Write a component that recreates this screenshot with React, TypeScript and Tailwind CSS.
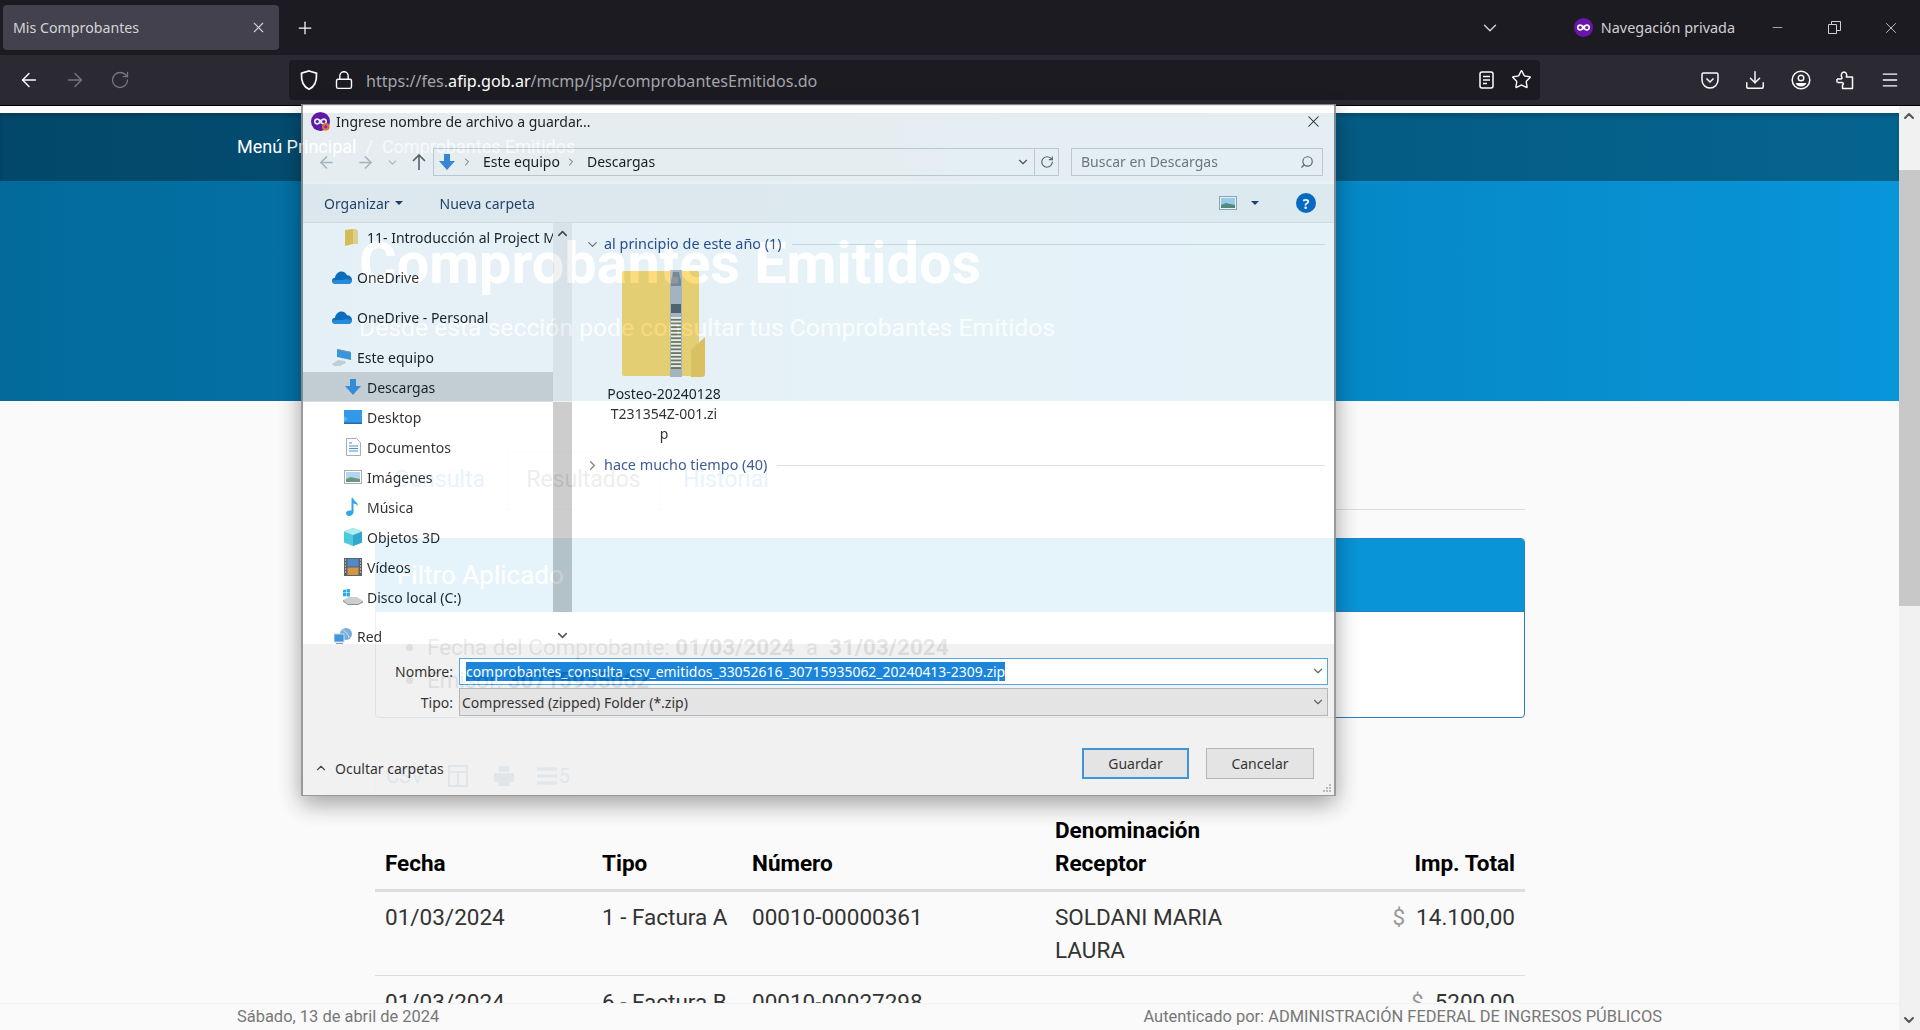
import { ArrowLeft, ArrowRight, RotateCw, Plus, X, ChevronDown, ChevronUp, ChevronRight, Star, Lock, Download, Menu, Minus, Search } from "lucide-react";

const sidebarItems = [
  { label: "Descargas", icon: "down", selected: true },
  { label: "Desktop", icon: "desktop" },
  { label: "Documentos", icon: "docs" },
  { label: "Imágenes", icon: "images" },
  { label: "Música", icon: "music" },
  { label: "Objetos 3D", icon: "cube" },
  { label: "Vídeos", icon: "video" },
  { label: "Disco local (C:)", icon: "disk" },
];

function MaskLogo({ size = 18, badge = false }: { size?: number; badge?: boolean }) {
  return (
    <svg width={size} height={size} viewBox="0 0 18 18" className="shrink-0">
      <circle cx="9" cy="9" r="9" fill="#6b14ad" />
      <path d="M2.8 9c0-2 1.3-3 3-3 1.4 0 2.2.7 3.2 1.3C10 6.7 10.800 6 12.200 6c1.700 0 3 1 3 3s-1.300 3-3 3c-1.400 0-2.200-.7-3.200-1.300C8 11.300 7.200 12 5.800 12c-1.700 0-3-1-3-3z" fill="#fff" />
      <circle cx="5.900" cy="9" r="1.500" fill="#6b14ad" />
      <circle cx="12.100" cy="9" r="1.500" fill="#6b14ad" />
      {badge && <circle cx="14" cy="14" r="3.600" fill="#f5762a" />}
      {badge && <circle cx="14" cy="14" r="1.500" fill="#7b2bd0" />}
    </svg>
  );
}

function WinIcon({ name }: { name: string }) {
  if (name === "down")
    return (
      <svg width="18" height="18" viewBox="0 0 18 18">
        <path d="M6 1h6v7h5l-8 9-8-9h5z" fill="#3b8ede" />
      </svg>
    );
  if (name === "desktop")
    return (
      <svg width="18" height="14" viewBox="0 0 18 14">
        <rect width="18" height="13" fill="#1b8ee6" />
        <path d="M0 12 L4 9 L0 6z" fill="#3fb0f2" />
        <rect y="12.500" width="18" height="1.500" fill="#0b5c9c" />
      </svg>
    );
  if (name === "docs")
    return (
      <svg width="15" height="18" viewBox="0 0 15 18">
        <path d="M.5.500h10l4 4v13H.5z" fill="#fafcff" stroke="#9aa7b5" />
        <path d="M3 5h3M3 8h9M3 10.500h9M3 13h9" stroke="#3f84c8" />
      </svg>
    );
  if (name === "images")
    return (
      <svg width="18" height="14" viewBox="0 0 18 14">
        <rect x=".5" y=".5" width="17" height="13" fill="#fff" stroke="#9ea6ad" />
        <rect x="2" y="2" width="14" height="10" fill="#a9d3ee" />
        <path d="M2 9l5-2 4 1 5 1v3H2z" fill="#5d8a74" />
      </svg>
    );
  if (name === "music")
    return (
      <svg width="14" height="18" viewBox="0 0 14 18">
        <path d="M5.500 0h1.500c.5 3 5 4 5 8-1-1.500-3-2.500-4.500-2.500V14c0 2-2 4-4.500 4C1 18 0 16.500 0 15s2-3 5.500-2.500z" fill="#1a9be6" />
      </svg>
    );
  if (name === "cube")
    return (
      <svg width="18" height="18" viewBox="0 0 18 18">
        <path d="M9 0l9 3.500v11L9 18l-9-3.500v-11z" fill="#38c4d8" />
        <path d="M9 7l9-3.500v11L9 18z" fill="#1c9fc8" />
        <path d="M9 7L0 3.500 9 0l9 3.500z" fill="#a5ecf0" />
      </svg>
    );
  if (name === "video")
    return (
      <svg width="18" height="18" viewBox="0 0 18 18">
        <rect width="18" height="18" fill="#4a5058" />
        <rect x="3.500" y="1" width="11" height="7.500" fill="#3c7ec4" />
        <rect x="3.500" y="9.500" width="11" height="7.500" fill="#d18a2e" />
        <path d="M1 2h1M1 5h1M1 8h1M1 11h1M1 14h1M16 2h1M16 5h1M16 8h1M16 11h1M16 14h1" stroke="#fff" />
      </svg>
    );
  if (name === "disk")
    return (
      <svg width="20" height="16" viewBox="0 0 20 16">
        <path d="M0 11l6-3h8l6 4-5 3H5z" fill="#c6cacd" />
        <path d="M0 11l5 4h10l5-3v1.500L15 16H5l-5-3.500z" fill="#7b8085" />
        <path d="M0 1l3-.5v3H0zM3.500.3L7 0v3.500H3.500zM0 4h3v3.300H0zM3.500 4H7v3.500H3.500z" fill="#14a1e8" />
      </svg>
    );
  if (name === "onedrive")
    return (
      <svg width="20" height="13" viewBox="0 0 20 13">
        <path d="M3.500 13C1.500 13 0 11.500 0 9.800 0 8 1.500 6.800 3 6.800 3.500 3 6.500.5 9.500.5c2.500 0 4.500 1.500 5.500 3.700 2.800 0 5 2.100 5 4.800 0 2.400-1.800 4-4 4z" fill="#0f6cc0" />
        <path d="M3.500 13C1.500 13 0 11.500 0 9.800c3-1 6-1 9-.5 3-1 7-1.500 11-.3 0 2.400-1.800 4-4 4z" fill="#2b8fe0" />
      </svg>
    );
  if (name === "pc")
    return (
      <svg width="20" height="17" viewBox="0 0 20 17">
        <path d="M5 0l14 3v8L5 8z" fill="#3f9be0" />
        <path d="M5 0l14 3v1L5 1z" fill="#7c9cb3" />
        <path d="M0 15l6-4 7 1 1 2-6 3H2z" fill="#d5d9dc" />
      </svg>
    );
  if (name === "net")
    return (
      <svg width="18" height="17" viewBox="0 0 18 17">
        <circle cx="12" cy="6" r="6" fill="#6aa4d8" />
        <path d="M9 2c2 1 6 5 6 8" stroke="#e5f0f9" fill="none" />
        <rect x="0" y="6" width="10" height="8" fill="#2e8bd8" stroke="#bcd6ea" />
        <rect x="2" y="15" width="7" height="1.500" fill="#8a98a4" />
      </svg>
    );
  return (
    <svg width="13" height="17" viewBox="0 0 13 17">
      <path d="M0 1l8-1v15l-8 2z" fill="#ecc550" />
      <path d="M8 0h3l2 2v13H8z" fill="#f5dc8a" />
    </svg>
  );
}

function ZipFolder() {
  const teeth = [0, 1, 2, 3, 4, 5, 6, 7, 8, 9, 10, 11, 12, 13];
  return (
    <svg width="86" height="107" viewBox="0 0 86 107">
      <path d="M1 3a2 2 0 0 1 2-2h73a2 2 0 0 1 2 2v103H3a2 2 0 0 1-2-2z" fill="#fdd96e" />
      <path d="M70 80l14-13v37a3 3 0 0 1-3 3H70z" fill="#f2c95a" />
      <rect x="49" y="0" width="12" height="107" fill="#b6bcc2" />
      <path d="M50 11l2-9h6l2 9v5H50z" fill="#858c93" />
      <rect x="50" y="34" width="10" height="9" fill="#5b6167" />
      {teeth.map((i) => (
        <g key={i}>
          <rect x="50" y={47 + i * 3.700} width="10" height="1.800" fill="#fbfbf5" />
          <rect x="50" y={49 + i * 3.700} width="10" height="1.900" fill="#7c7548" />
        </g>
      ))}
    </svg>
  );
}

function ArrowUpIcon() {
  return (
    <svg width="16" height="18" viewBox="0 0 16 18" className="ml-[12px] text-[#5f6468]">
      <path d="M8 17V2M2 8l6-6 6 6" fill="none" stroke="currentColor" strokeWidth="1.600" />
    </svg>
  );
}

function SaveDialog() {
  return (
    <div className="absolute left-[301px] top-[-2px] z-10 flex h-[692px] w-[1035px] flex-col border border-x-2 border-[#8f8f8f] bg-white font-['Noto_Sans',sans-serif] text-[14px] text-[#1a1a1a] opacity-90 shadow-[0_8px_22px_rgba(0,0,0,0.4)]">
      <div className="h-[6px] shrink-0" />
      {/* title */}
      <div className="flex h-[21px] shrink-0 items-center px-[8px]">
        <MaskLogo size={19} badge />
        <span className="ml-[6px] text-[#202020]">Ingrese nombre de archivo a guardar...</span>
        <X size={19} strokeWidth={1.3} className="ml-auto mr-[3px] text-[#222]" />
      </div>
      {/* address */}
      <div className="mt-[16px] flex h-[28px] shrink-0 items-center pl-[14px]">
        <ArrowLeft size={19} className="text-[#b8c0c6]" />
        <ArrowRight size={19} className="ml-[20px] text-[#b8c0c6]" />
        <ChevronDown size={13} className="ml-[11px] text-[#b8c0c6]" />
        <ArrowUpIcon />
        <div className="ml-[6px] flex h-[28px] w-[626px] items-center border border-[#cdd6db] pl-[4px]">
          <WinIcon name="down" />
          <ChevronRight size={12} className="ml-[5px] text-[#666]" />
          <span className="ml-[10px] pb-[2px]">Este equipo</span>
          <ChevronRight size={12} className="ml-[5px] text-[#666]" />
          <span className="ml-[10px] pb-[2px]">Descargas</span>
          <ChevronDown size={14} className="ml-auto mr-[4px] text-[#555]" />
          <div className="flex h-full w-[24px] items-center justify-center border-l border-[#cdd6db]">
            <RotateCw size={14} className="text-[#666]" />
          </div>
        </div>
        <div className="ml-[12px] flex h-[28px] w-[252px] items-center justify-between border border-[#cdd6db] pl-[9px] pr-[8px] text-[#7a7a7a]">
          <span className="pb-[2px]">Buscar en Descargas</span>
          <Search size={14} className="-scale-x-100 text-[#666]" />
        </div>
      </div>
      {/* toolbar */}
      <div className="mt-[8px] flex h-[39px] shrink-0 items-center border-b border-[#e3e8eb] bg-[#f5f5f5] text-[#1f3a5f]">
        <span className="ml-[21px]">Organizar</span>
        <span className="ml-[5px] h-0 w-0 border-x-[4px] border-t-[4px] border-x-transparent border-t-[#1f3a5f]" />
        <span className="ml-[37px]">Nueva carpeta</span>
        <span className="ml-auto">
          <WinIcon name="images" />
        </span>
        <span className="ml-[14px] h-0 w-0 border-x-[4px] border-t-[4px] border-x-transparent border-t-[#1f3a5f]" />
        <span className="ml-[37px] mr-[18px] flex h-[20px] w-[20px] items-center justify-center rounded-full bg-[#0a66c2] text-[14px] font-bold text-white">?</span>
      </div>
      {/* body */}
      <div className="flex min-h-0 flex-1">
        <div className="-mt-[1px] w-[250px] shrink-0 overflow-hidden">
          <div className="flex h-[30px] items-center whitespace-nowrap pl-[42px]">
            <WinIcon name="folder" />
            <span className="ml-[9px] w-[186px] overflow-hidden">11- Introducción al Project Management</span>
          </div>
          <div className="mt-[10px] flex h-[30px] items-center pl-[29px]">
            <WinIcon name="onedrive" />
            <span className="ml-[5px]">OneDrive</span>
          </div>
          <div className="mt-[10px] flex h-[30px] items-center pl-[29px]">
            <WinIcon name="onedrive" />
            <span className="ml-[5px]">OneDrive - Personal</span>
          </div>
          <div className="mt-[10px] flex h-[30px] items-center pl-[29px]">
            <WinIcon name="pc" />
            <span className="ml-[5px]">Este equipo</span>
          </div>
          {sidebarItems.map((it) => (
            <div key={it.label} className={`flex h-[30px] items-center ${it.selected ? "bg-[#d9d9d9]" : ""}`}>
              <span className="ml-[40px] flex w-[20px] justify-center">
                <WinIcon name={it.icon} />
              </span>
              <span className="ml-[4px]">{it.label}</span>
            </div>
          ))}
          <div className="mt-[9px] flex h-[30px] items-center pl-[31px]">
            <WinIcon name="net" />
            <span className="ml-[5px]">Red</span>
          </div>
        </div>
        {/* sidebar scrollbar */}
        <div className="relative flex w-[19px] shrink-0 flex-col items-center text-[#444]">
          <div className="h-[179px] w-full bg-[#f0f0f0]" />
          <div className="h-[210px] w-full bg-[#c8c8c8]" />
          <ChevronUp size={15} strokeWidth={2.500} className="absolute top-[3px]" />
          <ChevronDown size={15} strokeWidth={2.500} className="absolute bottom-[1px]" />
        </div>
        {/* file list */}
        <div className="min-w-0 flex-1 pl-[13px] pr-[9px]">
          <div className="mt-[10px] flex h-[22px] items-center text-[14.400px] text-[#2b4a8a]">
            <ChevronDown size={15} className="text-[#777]" />
            <span className="ml-[4px] whitespace-nowrap">al principio de este año (1)</span>
            <span className="ml-[10px] h-px flex-1 bg-[#d8dfe3]" />
          </div>
          <div className="ml-[20px] mt-[15px] flex w-[118px] flex-col items-center">
            <ZipFolder />
            <div className="mt-[7px] text-center leading-[20px]">
              Posteo-20240128
              <br />
              T231354Z-001.zi
              <br />p
            </div>
          </div>
          <div className="mt-[10px] flex h-[22px] items-center text-[14.400px] text-[#2b4a8a]">
            <ChevronRight size={15} className="text-[#777]" />
            <span className="ml-[4px] whitespace-nowrap">hace mucho tiempo (40)</span>
            <span className="ml-[10px] h-px flex-1 bg-[#d8dfe3]" />
          </div>
        </div>
      </div>
      {/* footer */}
      <div className="relative h-[151px] shrink-0 bg-[#f0f0f0] text-[14px]">
        <div className="mt-[13px] flex h-[28px] items-center pr-[6px]">
          <span className="w-[150px] text-right">Nombre:</span>
          <div className="ml-[6px] flex h-[27px] flex-1 items-center border border-[#3a9de6] bg-white pl-[6px]">
            <span className="bg-[#0078d7] text-[13.940px] leading-[19px] text-white">comprobantes_consulta_csv_emitidos_33052616_30715935062_20240413-2309.zip</span>
            <ChevronDown size={14} className="ml-auto mr-[2px] text-[#555]" />
          </div>
        </div>
        <div className="mt-[3px] flex h-[28px] items-center pr-[6px]">
          <span className="w-[150px] text-right">Tipo:</span>
          <div className="ml-[6px] flex h-[28px] flex-1 items-center border border-[#adadad] bg-[#e1e1e1] pl-[2px]">
            <span>Compressed (zipped) Folder (*.zip)</span>
            <ChevronDown size={14} className="ml-auto mr-[2px] text-[#555]" />
          </div>
        </div>
        <div className="mt-[32px] flex h-[31px] items-center pr-[20px]">
          <div className="flex items-center pt-[9px]">
            <ChevronUp size={14} className="ml-[11px] text-[#333]" />
            <span className="ml-[7px]">Ocultar carpetas</span>
          </div>
          <button className="ml-auto h-[31px] w-[107px] border-2 border-[#2a88d8] bg-[#e1e1e1]">Guardar</button>
          <button className="ml-[17px] h-[31px] w-[108px] border border-[#adadad] bg-[#e1e1e1]">Cancelar</button>
        </div>
        <svg width="10" height="10" viewBox="0 0 10 10" className="absolute bottom-[2px] right-[2px]">
          <path d="M7 1h2v2H7zM4 4h2v2H4zM7 4h2v2H7zM1 7h2v2H1zM4 7h2v2H4zM7 7h2v2H7z" fill="#b5b5b5" />
        </svg>
      </div>
    </div>
  );
}

function BrowserBar() {
  return (
    <div className="font-['Noto_Sans',sans-serif]">
      {/* tabs */}
      <div className="flex h-[55px] items-center bg-[#1c1b22] text-[#fbfbfe]">
        <div className="ml-[3px] flex h-[45px] w-[276px] items-center justify-between rounded-[4px] bg-[#42414d] pl-[10px] pr-[12px] text-[14.200px] text-[#d4d4d8]">
          <span>Mis Comprobantes</span>
          <X size={17} strokeWidth={1.500} className="text-[#d4d4d8]" />
        </div>
        <Plus size={20} strokeWidth={1.500} className="ml-[16px]" />
        <ChevronDown size={22} strokeWidth={1.500} className="ml-auto mr-[73px] text-[#d4d4d8]" />
        <MaskLogo size={19} />
        <span className="ml-[8px] text-[14.400px] text-[#d0d0d4]">Navegación privada</span>
        <Minus size={15} strokeWidth={1.200} className="ml-[35px] text-[#d0d0d4]" />
        <svg width="13" height="13" viewBox="0 0 13 13" className="ml-[43px] text-[#d0d0d4]">
          <path d="M.5 3.500h8v9h-8zM3.500 3.500v-3h9v9h-4" fill="none" stroke="currentColor" />
        </svg>
        <X size={18} strokeWidth={1.200} className="ml-[41px] mr-[20px] text-[#d0d0d4]" />
      </div>
      {/* toolbar */}
      <div className="flex h-[51px] items-center border-b border-black bg-[#2b2a33] pb-[1px] text-[#fbfbfe]">
        <ArrowLeft size={22} strokeWidth={1.600} className="ml-[18px]" />
        <ArrowRight size={22} strokeWidth={1.600} className="ml-[24px] text-[#77767d]" />
        <RotateCw size={20} strokeWidth={1.600} className="ml-[24px] text-[#77767d]" />
        <div className="ml-[159px] flex h-[40px] w-[1251px] items-center rounded-[4px] bg-[#1c1b22] pl-[10px] pr-[8px]">
          <svg width="20" height="22" viewBox="0 0 20 22">
            <path d="M10 2l7.500 2.200c.5 8-2 13.500-7.500 16-5.500-2.500-8-8-7.500-16z" fill="none" stroke="#fbfbfe" strokeWidth="1.700" />
          </svg>
          <Lock size={20} strokeWidth={1.700} className="ml-[15px]" />
          <div className="ml-[12px] pt-[3px] text-[16.100px] text-[#a4a4ab]">
            https://fes.<span className="text-white">afip.gob.ar</span>/mcmp/jsp/comprobantesEmitidos.do
          </div>
          <svg width="15" height="18" viewBox="0 0 15 18" className="ml-auto">
            <rect x="1" y="1" width="13" height="16" rx="2" fill="none" stroke="#fbfbfe" strokeWidth="1.500" />
            <path d="M4 5.500h7M4 9h7M4 12.500h4" stroke="#fbfbfe" strokeWidth="1.400" />
          </svg>
          <Star size={21} strokeWidth={1.600} className="ml-[17px]" />
        </div>
        <svg width="18" height="18" viewBox="0 0 18 18" className="ml-[161px]">
          <path d="M2.500 2h13A1.500 1.500 0 0 1 17 3.500V9A8 8 0 0 1 1 9V3.500A1.500 1.500 0 0 1 2.500 2z" fill="none" stroke="#fbfbfe" strokeWidth="1.500" />
          <path d="M5.500 7.500L9 11l3.500-3.500" fill="none" stroke="#fbfbfe" strokeWidth="1.500" />
        </svg>
        <Download size={22} strokeWidth={1.600} className="ml-[25px]" />
        <svg width="20" height="20" viewBox="0 0 20 20" className="ml-[25px]">
          <circle cx="10" cy="10" r="8.800" fill="none" stroke="#fbfbfe" strokeWidth="1.500" />
          <circle cx="10" cy="8" r="2.800" fill="none" stroke="#fbfbfe" strokeWidth="1.400" />
          <path d="M4.500 13h11c-1 2.500-3 3.500-5.500 3.500S5.500 15.500 4.500 13z" fill="#fbfbfe" />
        </svg>
        <svg width="18" height="20" viewBox="0 0 18 20" className="ml-[25px]">
          <path d="M1 9h3.500c1.500 0 2-1 1.200-2C5 6 5 2 8 2s3 4 2.300 5h6.200v11.500h-10V15c1-.8 1.500-2-.5-2.500H1.500" fill="none" stroke="#fbfbfe" strokeWidth="1.500" strokeLinejoin="round" />
          <path d="M1 9v3.500" stroke="#fbfbfe" strokeWidth="1.500" />
        </svg>
        <Menu size={20} strokeWidth={1.600} className="ml-[26px]" />
      </div>
    </div>
  );
}

function Page() {
  return (
    <div className="min-w-0 flex-1 bg-[#fafafa] font-['Roboto',sans-serif]">
      <div className="h-[7px] bg-white" />
      <div className="flex h-[68px] items-center bg-gradient-to-r from-[#03486a] to-[#05648f] pb-[2px] pl-[237px] text-[18px] text-white shadow-[inset_0_3px_4px_rgba(0,0,0,0.18)]">
        Menú Principal
        <span className="ml-[9px] text-white/70">/</span>
        <span className="ml-[9px] text-white/70">Comprobantes Emitidos</span>
      </div>
      <div className="h-[220px] bg-gradient-to-r from-[#036a9b] to-[#0895d9] pl-[359px] text-white">
        <div className="pt-[51px] text-[57.600px] font-bold leading-[64px]">Comprobantes Emitidos</div>
        <div className="mt-[15px] text-[24.700px] leading-[34px] text-white/80">Desde esta sección pode consultar tus Comprobantes Emitidos</div>
      </div>
      <div className="ml-[375px] w-[1150px] pt-[50px]">
        {/* tabs */}
        <div className="flex h-[59px] border-b border-[#dddddd] text-[23px]">
          <div className="flex w-[132px] items-center pl-[19px] text-[#0894d6]">Consulta</div>
          <div className="flex w-[153px] items-center justify-center border-x border-t border-[#dddddd] text-[#555]">Resultados</div>
          <div className="flex items-center pl-[23px] text-[#0894d6]">Historial</div>
        </div>
        {/* panel */}
        <div className="mt-[28px] h-[180px] overflow-hidden rounded-[4px] border border-[#2a7fc4] bg-white">
          <div className="flex h-[73px] items-center border-b border-[#2a7fc4] bg-[#0894d6] pl-[21px] text-[26px] text-white">Filtro Aplicado</div>
          <ul className="list-disc pl-[51px] pt-[19px] text-[22.400px] leading-[33px] text-[#444]">
            <li>
              Fecha del Comprobante: <b className="text-[#222]">01/03/2024</b> &nbsp;a&nbsp; <b className="text-[#222]">31/03/2024</b>
            </li>
            <li>
              Emisor: <b className="text-[#222]">30715935062</b>
            </li>
          </ul>
        </div>
        {/* export buttons */}
        <div className="mt-[38px] flex h-[40px] w-[208px] items-center rounded-[4px] border border-[#e5e5e5] pl-[10px] text-[20px] text-[#5a93b5]">
          CSV
          <svg width="20" height="22" viewBox="0 0 20 22" className="ml-[24px]">
            <path d="M1 1h18v20H1zM1 7h18M10 7v14" fill="none" stroke="#5a93b5" strokeWidth="2" />
          </svg>
          <svg width="22" height="22" viewBox="0 0 22 22" className="ml-[25px]">
            <path d="M6 1h10v6H6zM1 8h20v9h-4v4H5v-4H1z" fill="#5a93b5" />
          </svg>
          <svg width="20" height="18" viewBox="0 0 20 18" className="ml-[22px]">
            <path d="M0 2h20M0 9h20M0 16h20" stroke="#5a93b5" strokeWidth="3" />
          </svg>
          <span className="ml-[2px]">5</span>
        </div>
        {/* table */}
        <div className="mt-[18px] text-[22.500px] leading-[33px] text-[#333]">
          <div className="grid grid-cols-[217px_150px_303px_205px_1fr] items-end border-b-[3px] border-[#dddddd] pb-[9px] font-bold text-black">
            <div className="px-[10px]">Fecha</div>
            <div className="px-[10px]">Tipo</div>
            <div className="px-[10px]">Número</div>
            <div className="px-[10px]">Denominación Receptor</div>
            <div className="px-[10px] text-right">Imp. Total</div>
          </div>
          <div className="grid grid-cols-[217px_150px_303px_205px_1fr] border-b border-[#dddddd] pb-[8px] pt-[9px]">
            <div className="px-[10px]">01/03/2024</div>
            <div className="whitespace-nowrap px-[10px]">1 - Factura A</div>
            <div className="px-[10px]">00010-00000361</div>
            <div className="px-[10px]">SOLDANI MARIA LAURA</div>
            <div className="px-[10px] text-right">
              <span className="mr-[11px] text-[#999]">$</span>14.100,00
            </div>
          </div>
          <div className="grid grid-cols-[217px_150px_303px_205px_1fr] pt-[10px]">
            <div className="px-[10px]">01/03/2024</div>
            <div className="whitespace-nowrap px-[10px]">6 - Factura B</div>
            <div className="px-[10px]">00010-00027298</div>
            <div className="px-[10px]" />
            <div className="px-[10px] text-right">
              <span className="mr-[11px] text-[#999]">$</span>5200,00
            </div>
          </div>
        </div>
      </div>
    </div>
  );
}

export default function App() {
  return (
    <div className="flex h-[1030px] w-[1920px] flex-col overflow-hidden bg-[#fafafa]">
      <BrowserBar />
      <div className="relative flex min-h-0 flex-1">
        <Page />
        {/* page scrollbar */}
        <div className="relative w-[21px] shrink-0 bg-[#f1f1f1]">
          <ChevronUp size={16} strokeWidth={3} className="absolute left-[2px] top-[2px] text-[#555]" />
          <div className="absolute inset-x-0 top-[64px] h-[436px] bg-[#c8c8c8]" />
          <ChevronDown size={16} strokeWidth={3} className="absolute bottom-[2px] left-[2px] text-[#555]" />
        </div>
        {/* sticky footer */}
        <div className="absolute bottom-0 left-0 right-[21px] flex h-[27px] items-center justify-between border-t border-[#f2f2f2] bg-[#fafafa] pl-[237px] pr-[237px] font-['Roboto',sans-serif] text-[16.450px] text-[#777]">
          <span>Sábado, 13 de abril de 2024</span>
          <span>Autenticado por: ADMINISTRACIÓN FEDERAL DE INGRESOS PÚBLICOS</span>
        </div>
        <SaveDialog />
      </div>
    </div>
  );
}
